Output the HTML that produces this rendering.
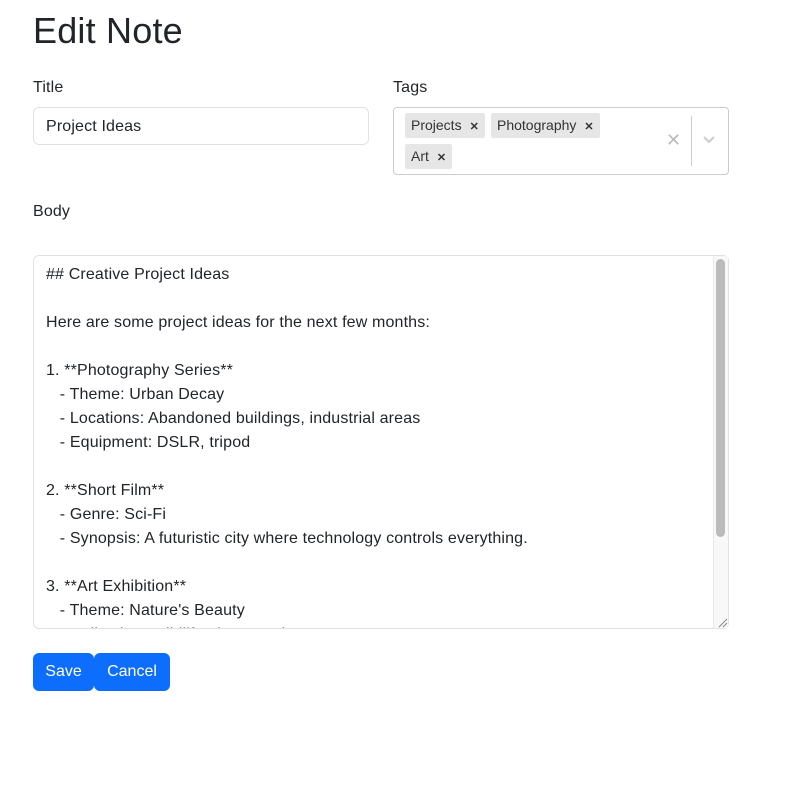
<!DOCTYPE html>
<html><head><meta charset="utf-8"><style>
*{box-sizing:border-box}
body{margin:0;width:786px;height:803px;background:#fff;font-family:"Liberation Sans",sans-serif;color:#212529;position:relative;overflow:hidden}
.a{position:absolute}
h1{position:absolute;left:33px;top:9px;margin:0;font-size:36px;font-weight:500;line-height:44px;letter-spacing:0.2px}
.lbl{font-size:16px;line-height:20px;letter-spacing:0.15px}
.inp{border:1px solid #dee2e6;border-radius:6px;background:#fff}
.tag{position:absolute;background:#e6e6e6;border-radius:2px;font-size:14px;height:25px;line-height:25px;padding:0 6px;color:#333}
.tag b{font-size:11px;margin-left:8px;font-weight:bold}
.ta{left:33px;top:255px;width:696px;height:374px;overflow:hidden;font-size:16px;line-height:24px;padding:7px 12px;white-space:pre;letter-spacing:0.15px}
.btn{position:absolute;top:653px;height:38px;background:#0d6efd;color:#fff;font-size:16px;line-height:38px;text-align:center;border-radius:6px}
</style></head><body>
<h1>Edit Note</h1>
<div class="a lbl" style="left:33px;top:78px">Title</div>
<div class="a lbl" style="left:393px;top:78px">Tags</div>
<div class="a inp" style="left:33px;top:107px;width:336px;height:38px;padding:0 12px;line-height:37px;font-size:16px;letter-spacing:0.15px">Project Ideas</div>
<div class="a inp" style="left:393px;top:107px;width:336px;height:68px;border-color:#ccc;border-radius:4px">
  <div class="tag" style="left:11px;top:5px">Projects<b>✕</b></div>
  <div class="tag" style="left:97px;top:5px">Photography<b>✕</b></div>
  <div class="tag" style="left:11px;top:36px">Art<b>✕</b></div>
  <div class="a" style="left:272px;top:22px;color:#bbb;font-size:18px">✕</div>
  <div class="a" style="left:297px;top:8px;width:1px;height:50px;background:#ccc"></div>
  <svg class="a" style="left:308px;top:27px" width="14" height="10" viewBox="0 0 14 10"><path d="M2 2l5 5 5-5" stroke="#ccc" stroke-width="2" fill="none"/></svg>
</div>
<div class="a lbl" style="left:33px;top:202px">Body</div>
<div class="a inp ta">## Creative Project Ideas

Here are some project ideas for the next few months:

1. **Photography Series**
   - Theme: Urban Decay
   - Locations: Abandoned buildings, industrial areas
   - Equipment: DSLR, tripod

2. **Short Film**
   - Genre: Sci-Fi
   - Synopsis: A futuristic city where technology controls everything.

3. **Art Exhibition**
   - Theme: Nature's Beauty
   - Collection: Wildlife photography</div>
<div class="a" style="left:713px;top:256px;width:15px;height:372px;background:#f8f8f8;border-left:1px solid #e8e8e8"></div>
<div class="a" style="left:716px;top:259px;width:9px;height:278px;background:#bbb;border-radius:5px"></div>
<svg class="a" style="left:716px;top:616px" width="12" height="12"><path d="M3 11L11 3M7 11L11 7" stroke="#888" stroke-width="1"/></svg>
<div class="btn" style="left:33px;width:61px">Save</div>
<div class="btn" style="left:94px;width:76px">Cancel</div>
</body></html>
